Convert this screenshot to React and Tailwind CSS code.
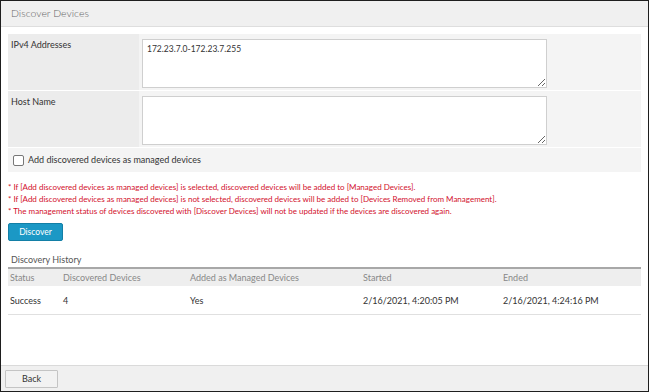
const NOTES = [
  '* If [Add discovered devices as managed devices] is selected, discovered devices will be added to [Managed Devices].',
  '* If [Add discovered devices as managed devices] is not selected, discovered devices will be added to [Devices Removed from Management].',
  '* The management status of devices discovered with [Discover Devices] will not be updated if the devices are discovered again.',
];

const HISTORY = [
  {
    status: 'Success',
    count: '4',
    added: 'Yes',
    started: '2/16/2021, 4:20:05 PM',
    ended: '2/16/2021, 4:24:16 PM',
  },
];

function FieldRow({ label, value }) {
  return (
    <div className="grid grid-cols-[131px_1fr] h-[56px]">
      <div className="bg-[#ececec] px-[3px] pt-[4px] text-[9px] text-[#333]">{label}</div>
      <div className="bg-[#f4f4f4] pl-[3px] pt-[5px]">
        <textarea
          defaultValue={value}
          className="block w-[405px] h-[49px] bg-white border border-[#cfcfcf] px-[4px] py-[3px] text-[8.5px] text-[#333] outline-none"
        />
      </div>
    </div>
  );
}

export default function App() {
  return (
    <div
      className="w-[649px] h-[392px] flex flex-col bg-white border border-[#1e1e1e] overflow-hidden"
      style={{ fontFamily: 'Lato, "Open Sans", sans-serif' }}
    >
      <div className="h-[26px] shrink-0 bg-[#f0f0f0] border-b border-[#dedede] flex items-center px-[10px] text-[10.5px] font-light text-[#666]">
        Discover Devices
      </div>

      <div className="flex-1 px-[7px] pt-[7px]">
        <div className="flex flex-col gap-[1px]">
          <FieldRow label="IPv4 Addresses" value="172.23.7.0-172.23.7.255" />
          <FieldRow label="Host Name" value="" />
          <label className="h-[24px] bg-[#f4f4f4] flex items-center gap-[4px] px-[5px] text-[9px] text-[#333]">
            <span className="w-[11px] h-[11px] bg-white border border-[#777] rounded-[2px]" />
            Add discovered devices as managed devices
          </label>
        </div>

        <div className="mt-[9px] flex flex-col text-[8px] leading-[12px] text-[#d2102c]">
          {NOTES.map((n) => (
            <p key={n}>{n}</p>
          ))}
        </div>

        <button className="mt-[6px] w-[55px] h-[18px] bg-[#1b98c5] border border-[#137fa6] rounded-[2px] text-[8.5px] text-white">
          Discover
        </button>

        <div className="mt-[12px] px-[3px] text-[9px] text-[#555] leading-[14px]">Discovery History</div>
        <div className="border-t-2 border-[#a8a8a8]">
          <div className="grid grid-cols-[53px_127px_173px_140px_1fr] h-[17px] items-center bg-[#eeeeee] pl-[2px] text-[9px] text-[#888]">
            <span>Status</span>
            <span>Discovered Devices</span>
            <span>Added as Managed Devices</span>
            <span>Started</span>
            <span>Ended</span>
          </div>
          {HISTORY.map((h) => (
            <div
              key={h.started}
              className="grid grid-cols-[53px_127px_173px_140px_1fr] h-[29px] items-center pl-[2px] text-[9px] text-[#333] border-b border-[#e0e0e0]"
            >
              <span>{h.status}</span>
              <span>{h.count}</span>
              <span>{h.added}</span>
              <span>{h.started}</span>
              <span>{h.ended}</span>
            </div>
          ))}
        </div>
      </div>

      <div className="h-[26px] shrink-0 bg-[#f0f0f0] border-t border-[#dadada] flex items-center px-[4px]">
        <button className="w-[53px] h-[18px] bg-[#f2f2f2] border border-[#c4c4c4] rounded-[1px] text-[9px] text-[#333]">
          Back
        </button>
      </div>
    </div>
  );
}
